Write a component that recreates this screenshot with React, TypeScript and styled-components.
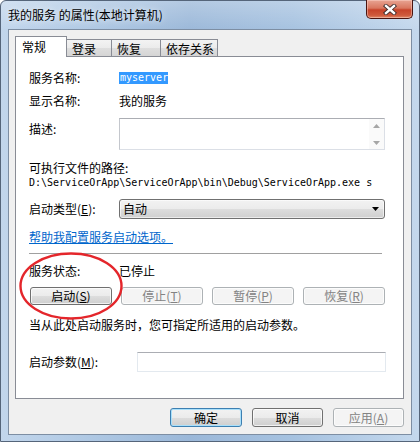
import React from "react";
import styled, { createGlobalStyle, css } from "styled-components";

const GlobalStyle = createGlobalStyle`
  html, body {
    margin: 0;
    padding: 0;
    background: #ffffff;
  }
  body {
    font-family: "Noto Sans CJK SC", "Microsoft YaHei", sans-serif;
    font-size: 12px;
    color: #000;
  }
`;

const Window = styled.div`
  width: 420px;
  height: 442px;
  box-sizing: border-box;
  display: flex;
  flex-direction: column;
  padding: 0 7px 6px 7px;
  border: 1px solid #55657a;
  border-radius: 6px 6px 0 0;
  background:
    linear-gradient(180deg, rgba(255, 255, 255, 0.25) 0%, rgba(255, 255, 255, 0) 30px),
    linear-gradient(90deg, #c2d6ec 0%, #b0c9e4 20%, #9bb8d9 45%, #a6c2e0 70%, #c4d8ed 100%);
`;

const TitleBar = styled.div`
  height: 28px;
  display: flex;
  align-items: flex-start;
  justify-content: space-between;
`;

const TitleText = styled.div`
  line-height: 28px;
  font-size: 12px;
  color: #000;
  text-shadow: 0 0 6px rgba(255, 255, 255, 0.9);
`;

const CloseButton = styled.div`
  width: 47px;
  height: 19px;
  margin: -1px -1px 0 0;
  box-sizing: border-box;
  border: 1px solid #4a1510;
  border-top: none;
  border-radius: 0 0 5px 5px;
  display: flex;
  align-items: center;
  justify-content: center;
  background: linear-gradient(180deg, #e8a493 0%, #d9775f 45%, #c7432a 55%, #cf5a3c 85%, #e08a6a 100%);
  box-shadow: inset 0 0 0 1px rgba(255, 220, 210, 0.45);
`;

const Client = styled.div`
  flex: 1;
  display: flex;
  flex-direction: column;
  background: #f0f0f0;
  border: 1px solid #7d8ea3;
  padding: 6px 7px 7px 6px;
  min-height: 0;
`;

const TabStrip = styled.div`
  display: flex;
  align-items: flex-end;
  height: 20px;
`;

const Tab = styled.div<{ $w: number; $active?: boolean }>`
  width: ${(p) => p.$w}px;
  box-sizing: border-box;
  border: 1px solid #898c95;
  border-bottom: none;
  padding-left: 5px;
  font-size: 12px;
  ${(p) =>
    p.$active
      ? css`
          height: 21px;
          margin-bottom: -1px;
          background: #ffffff;
          position: relative;
          z-index: 2;
          padding-left: 6px;
          line-height: 20px;
        `
      : css`
          height: 17px;
          margin-left: -1px;
          line-height: 17px;
          background: linear-gradient(180deg, #f3f3f3 0%, #ebebeb 50%, #dedede 51%, #d5d5d5 100%);
        `}
`;

const Panel = styled.div`
  position: relative;
  flex: 1;
  display: flex;
  flex-direction: column;
  background: #ffffff;
  border: 1px solid #898c95;
  padding: 0 18px 0 13px;
`;

const Row = styled.div<{ $mt: number; $h: number; $label?: number }>`
  display: grid;
  grid-template-columns: ${(p) => p.$label ?? 90}px 1fr;
  align-items: center;
  margin-top: ${(p) => p.$mt}px;
  height: ${(p) => p.$h}px;
  line-height: 16px;
`;

const Line = styled.div<{ $mt: number; $h: number }>`
  margin-top: ${(p) => p.$mt}px;
  height: ${(p) => p.$h}px;
  line-height: ${(p) => p.$h}px;
  white-space: nowrap;
`;

const TopLabel = styled.div`
  align-self: start;
  padding-top: 3px;
`;

const Selected = styled.span`
  justify-self: start;
  font-family: "DejaVu Sans Mono", "Liberation Mono", monospace;
  font-size: 10px;
  line-height: 12px;
  background: #3399ff;
  color: #ffffff;
  padding: 0 0 0 1px;
`;

const Mono = styled(Line)`
  font-family: "DejaVu Sans Mono", "Liberation Mono", monospace;
  font-size: 10px;
`;

const TextArea = styled.div`
  height: 32px;
  box-sizing: border-box;
  border: 1px solid #dbdfe6;
  border-top-color: #abadb3;
  border-left-color: #c4c7cd;
  display: flex;
  justify-content: flex-end;
`;

const ScrollCol = styled.div`
  width: 15px;
  display: flex;
  flex-direction: column;
  align-items: center;
  justify-content: space-between;
  padding: 5px 0 4px;
  background: #fafafa;
`;

const Combo = styled.div`
  height: 20px;
  box-sizing: border-box;
  border: 1px solid #707070;
  border-radius: 3px;
  display: flex;
  align-items: center;
  justify-content: space-between;
  padding: 0 5px 0 3px;
  background: linear-gradient(180deg, #f2f2f2 0%, #ebebeb 50%, #dddddd 51%, #cfcfcf 100%);
  box-shadow: inset 0 0 0 1px rgba(255, 255, 255, 0.6);
`;

const Link = styled(Line)`
  color: #0066cc;
  text-decoration: underline;
`;

const Separator = styled.div`
  margin: 8px 3px 0 0;
  height: 1px;
  background: #a0a0a0;
`;

const ButtonRow = styled.div<{ $mt: number; $gap: number; $end?: boolean }>`
  display: flex;
  gap: ${(p) => p.$gap}px;
  margin-top: ${(p) => p.$mt}px;
  padding-left: ${(p) => (p.$end ? 0 : 1)}px;
  justify-content: ${(p) => (p.$end ? "flex-end" : "flex-start")};
`;

const Button = styled.div<{ $w: number; $h: number; $disabled?: boolean; $default?: boolean }>`
  width: ${(p) => p.$w}px;
  height: ${(p) => p.$h}px;
  box-sizing: border-box;
  border: 1px solid #707070;
  border-radius: 3px;
  display: flex;
  align-items: center;
  justify-content: center;
  font-size: 12px;
  line-height: 16px;
  color: #000;
  background: linear-gradient(180deg, #f2f2f2 0%, #ebebeb 50%, #dddddd 51%, #cfcfcf 100%);
  box-shadow: inset 0 0 0 1px rgba(255, 255, 255, 0.7);
  ${(p) =>
    p.$default &&
    css`
      border-color: #3c7fb1;
      box-shadow: inset 0 0 0 1px #a9e0fb;
    `}
  ${(p) =>
    p.$disabled &&
    css`
      border-color: #adb2b5;
      background: #f4f4f4;
      color: #838383;
      box-shadow: inset 0 0 0 1px #fcfcfc;
    `}
  u {
    text-decoration: underline;
  }
`;

const Input = styled.div`
  height: 20px;
  box-sizing: border-box;
  border: 1px solid #e3e9ef;
  border-top-color: #abadb3;
  margin-right: -1px;
`;

const Annotation = styled.svg`
  position: absolute;
  left: 3px;
  top: 195px;
  z-index: 5;
  pointer-events: none;
`;

const Arrow = ({ up }: { up?: boolean }) => (
  <svg width="7" height="4" viewBox="0 0 7 4">
    <path d={up ? "M0 4 L3.5 0 L7 4 Z" : "M0 0 L3.5 4 L7 0 Z"} fill="#a6a6a6" />
  </svg>
);

export default function App() {
  return (
    <>
      <GlobalStyle />
      <Window>
        <TitleBar>
          <TitleText>我的服务 的属性(本地计算机)</TitleText>
          <CloseButton>
            <svg width="14" height="11" viewBox="0 0 14 11">
              <path d="M3 2 L11 9 M11 2 L3 9" stroke="#3a2a2a" strokeWidth="4.2" strokeLinecap="square" />
              <path d="M3 2 L11 9 M11 2 L3 9" stroke="#ffffff" strokeWidth="2.4" strokeLinecap="square" />
            </svg>
          </CloseButton>
        </TitleBar>
        <Client>
          <TabStrip>
            <Tab $w={52} $active>
              常规
            </Tab>
            <Tab $w={46}>登录</Tab>
            <Tab $w={50}>恢复</Tab>
            <Tab $w={58}>依存关系</Tab>
          </TabStrip>
          <Panel>
            <Row $mt={13} $h={16}>
              <span>服务名称:</span>
              <Selected>myserver</Selected>
            </Row>
            <Row $mt={7} $h={16}>
              <span>显示名称:</span>
              <span>我的服务</span>
            </Row>
            <Row $mt={9} $h={32}>
              <TopLabel>描述:</TopLabel>
              <TextArea>
                <ScrollCol>
                  <Arrow up />
                  <Arrow />
                </ScrollCol>
              </TextArea>
            </Row>
            <Line $mt={10} $h={16}>
              可执行文件的路径:
            </Line>
            <Mono $mt={0} $h={14}>
              D:\ServiceOrApp\ServiceOrApp\bin\Debug\ServiceOrApp.exe s
            </Mono>
            <Row $mt={9} $h={20}>
              <span>
                启动类型(<u>E</u>):
              </span>
              <Combo>
                <span>自动</span>
                <svg width="7" height="4" viewBox="0 0 7 4">
                  <path d="M0 0 L7 0 L3.5 4 Z" fill="#000" />
                </svg>
              </Combo>
            </Row>
            <Link $mt={10} $h={16}>
              帮助我配置服务启动选项。
            </Link>
            <Separator />
            <Row $mt={9} $h={16}>
              <span>服务状态:</span>
              <span>已停止</span>
            </Row>
            <ButtonRow $mt={8} $gap={9}>
              <Button $w={82} $h={18}>
                启动(<u>S</u>)
              </Button>
              <Button $w={82} $h={18} $disabled>
                停止(<u>T</u>)
              </Button>
              <Button $w={82} $h={18} $disabled>
                暂停(<u>P</u>)
              </Button>
              <Button $w={82} $h={18} $disabled>
                恢复(<u>R</u>)
              </Button>
            </ButtonRow>
            <Line $mt={12} $h={16}>
              当从此处启动服务时，您可指定所适用的启动参数。
            </Line>
            <Row $mt={19} $h={20} $label={108}>
              <span>
                启动参数(<u>M</u>):
              </span>
              <Input />
            </Row>
            <Annotation width="106" height="70" viewBox="0 0 106 70">
              <ellipse cx="52" cy="34" rx="50.5" ry="32.5" fill="none" stroke="#e4262b" strokeWidth="2.4" />
            </Annotation>
          </Panel>
          <ButtonRow $mt={9} $gap={10} $end>
            <Button $w={72} $h={19} $default>
              确定
            </Button>
            <Button $w={71} $h={19}>
              取消
            </Button>
            <Button $w={71} $h={19} $disabled>
              应用(<u>A</u>)
            </Button>
          </ButtonRow>
        </Client>
      </Window>
    </>
  );
}
